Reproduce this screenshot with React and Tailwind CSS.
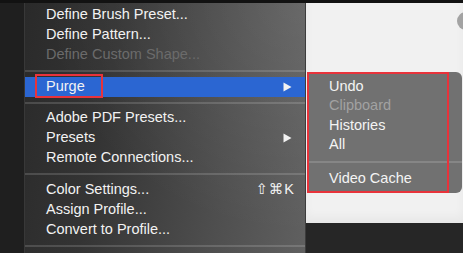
const mainMenu = [
  { label: 'Define Brush Preset...' },
  { label: 'Define Pattern...' },
  { label: 'Define Custom Shape...', disabled: true },
  'sep',
  { label: 'Purge', active: true, submenu: true },
  'sep-sm',
  { label: 'Adobe PDF Presets...' },
  { label: 'Presets', submenu: true },
  { label: 'Remote Connections...' },
  'sep',
  { label: 'Color Settings...', shortcut: '⇧⌘K' },
  { label: 'Assign Profile...' },
  { label: 'Convert to Profile...' },
  'sep',
];

const purgeItems = [
  { label: 'Undo' },
  { label: 'Clipboard', disabled: true },
  { label: 'Histories' },
  { label: 'All' },
  'sep',
  { label: 'Video Cache' },
];

function Arrow() {
  return (
    <svg width="9" height="10" viewBox="0 0 9 10" className="shrink-0 mr-[3px]">
      <path d="M0.5 0.5 L8.5 5 L0.5 9.5 Z" fill="#f2f2f2" />
    </svg>
  );
}

export default function App() {
  return (
    <div className="relative w-[463px] h-[253px] overflow-hidden bg-[#1e1e1e] flex flex-col font-['Liberation_Sans','DejaVu_Sans',sans-serif] antialiased">
      {/* top bar */}
      <div className="h-[3px] bg-[#121212] shrink-0" />

      <div className="flex flex-1 min-h-0">
        {/* left app strip */}
        <div className="w-[25px] shrink-0 bg-[#1f1f1f] border-r border-[#383838]" />

        {/* main menu */}
        <div className="w-[281px] shrink-0 pt-[2px] border-r border-[#3c3c3c] bg-[radial-gradient(ellipse_at_100%_0%,rgba(255,255,255,0.1),transparent_65%),linear-gradient(100deg,#2a2a2a_0%,#343434_30%,#4e4e4e_70%,#606060_100%)]">
          {mainMenu.map((item, i) => {
            if (item === 'sep' || item === 'sep-sm') {
              return (
                <div key={i} className={`${item === 'sep' ? 'h-[12px]' : 'h-[11px]'} flex items-center`}>
                  <div className="h-[2px] w-full bg-white/15" />
                </div>
              );
            }
            return (
              <div
                key={i}
                className={`relative h-5 flex items-center pl-[21px] pr-[10px] text-[14.5px] ${
                  item.active ? 'bg-[#2b66d2]' : ''
                } ${item.disabled ? 'text-[#6b6b6b]' : 'text-[#f2f2f2]'}`}
              >
                <span className="flex-1 whitespace-nowrap">{item.label}</span>
                {item.shortcut && <span className="text-[14.5px] tracking-[1px]">{item.shortcut}</span>}
                {item.submenu && <Arrow />}
                {item.active && (
                  <div className="absolute left-[10px] top-[-3px] w-[68px] h-[24px] border-2 border-[#e8333b]" />
                )}
              </div>
            );
          })}
        </div>

        {/* document area */}
        <div className="flex-1 flex flex-col">
          <div className="h-[220px] bg-[#f1f1f1] shadow-[inset_0_-6px_10px_rgba(0,0,0,0.04)]" />
          <div className="flex-1 bg-[#262626]" />
        </div>
      </div>

      {/* partial circle at right edge */}
      <div className="absolute left-[457px] top-[12px] w-[18px] h-[18px] rounded-full bg-[#a3a3a3]" />

      {/* purge submenu */}
      <div className="absolute left-[307px] top-[72px] w-[155px] h-[121px] rounded-r-[6px] bg-[#717171] pt-[5px]">
        {purgeItems.map((item, i) =>
          item === 'sep' ? (
            <div key={i} className="h-[14px] flex items-center pl-[2px]">
              <div className="h-[2px] w-full bg-white/15" />
            </div>
          ) : (
            <div
              key={i}
              className={`h-[19.5px] flex items-center pl-[22px] text-[14.5px] ${
                item.disabled ? 'text-[#a2a2a2]' : 'text-[#f4f4f4]'
              }`}
            >
              {item.label}
            </div>
          )
        )}
        <div className="absolute left-0 top-0 w-[142px] h-[121px] border-2 border-[#e8333b]" />
      </div>
    </div>
  );
}
